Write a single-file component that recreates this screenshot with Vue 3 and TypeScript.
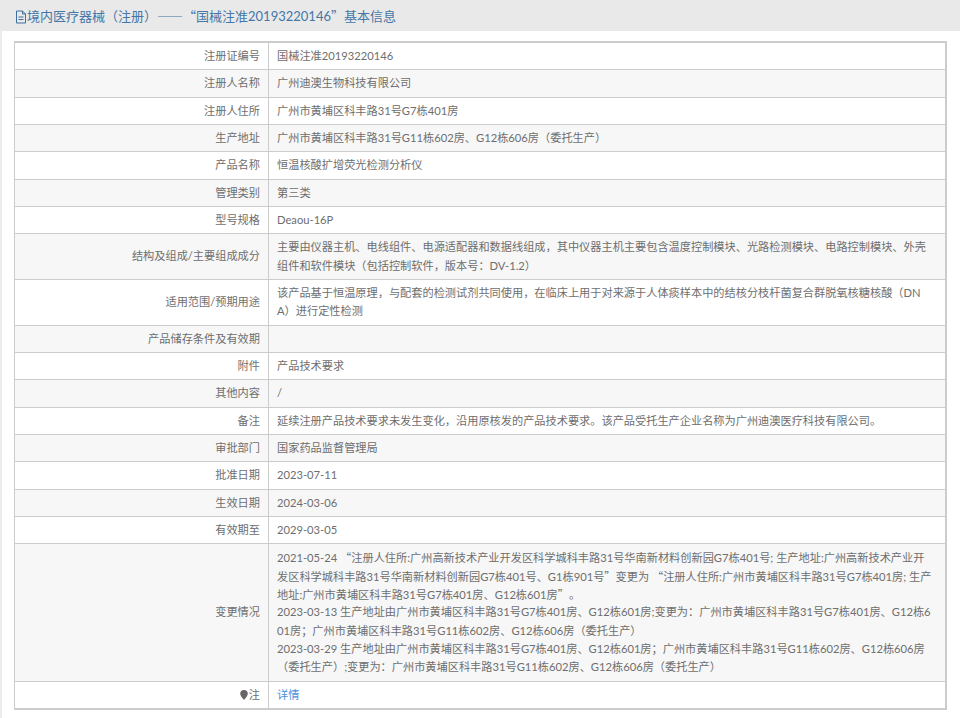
<script setup lang="ts">
interface Row { label: string; lines: string[]; link?: boolean; note?: boolean }
const rows: Row[] = [
  { label: '注册证编号', lines: ['国械注准20193220146'] },
  { label: '注册人名称', lines: ['广州迪澳生物科技有限公司'] },
  { label: '注册人住所', lines: ['广州市黄埔区科丰路31号G7栋401房'] },
  { label: '生产地址', lines: ['广州市黄埔区科丰路31号G11栋602房、G12栋606房（委托生产）'] },
  { label: '产品名称', lines: ['恒温核酸扩增荧光检测分析仪'] },
  { label: '管理类别', lines: ['第三类'] },
  { label: '型号规格', lines: ['Deaou-16P'] },
  { label: '结构及组成/主要组成成分', lines: ['主要由仪器主机、电线组件、电源适配器和数据线组成，其中仪器主机主要包含温度控制模块、光路检测模块、电路控制模块、外壳', '组件和软件模块（包括控制软件，版本号：DV-1.2）'] },
  { label: '适用范围/预期用途', lines: ['该产品基于恒温原理，与配套的检测试剂共同使用，在临床上用于对来源于人体痰样本中的结核分枝杆菌复合群脱氧核糖核酸（DN', 'A）进行定性检测'] },
  { label: '产品储存条件及有效期', lines: [''] },
  { label: '附件', lines: ['产品技术要求'] },
  { label: '其他内容', lines: ['/'] },
  { label: '备注', lines: ['延续注册产品技术要求未发生变化，沿用原核发的产品技术要求。该产品受托生产企业名称为广州迪澳医疗科技有限公司。'] },
  { label: '审批部门', lines: ['国家药品监督管理局'] },
  { label: '批准日期', lines: ['2023-07-11'] },
  { label: '生效日期', lines: ['2024-03-06'] },
  { label: '有效期至', lines: ['2029-03-05'] },
  { label: '变更情况', lines: [
    '2021-05-24 “注册人住所:广州高新技术产业开发区科学城科丰路31号华南新材料创新园G7栋401号; 生产地址:广州高新技术产业开',
    '发区科学城科丰路31号华南新材料创新园G7栋401号、G1栋901号”变更为 “注册人住所:广州市黄埔区科丰路31号G7栋401房; 生产',
    '地址:广州市黄埔区科丰路31号G7栋401房、G12栋601房”。',
    '2023-03-13 生产地址由广州市黄埔区科丰路31号G7栋401房、G12栋601房;变更为：广州市黄埔区科丰路31号G7栋401房、G12栋6',
    '01房；广州市黄埔区科丰路31号G11栋602房、G12栋606房（委托生产）',
    '2023-03-29 生产地址由广州市黄埔区科丰路31号G7栋401房、G12栋601房；广州市黄埔区科丰路31号G11栋602房、G12栋606房',
    '（委托生产）;变更为：广州市黄埔区科丰路31号G11栋602房、G12栋606房（委托生产）',
  ] },
  { label: '注', lines: ['详情'], link: true, note: true },
];
const parts = (s: string): string[] => s.split(/([“”])/).filter((p) => p !== '');
</script>

<template>
  <div class="page" lang="zh-CN">
    <h1 class="title">
      <svg class="doc" viewBox="0 0 12 14" width="12" height="14" aria-hidden="true">
        <path d="M1.5 1h6l3 3v9h-9z M7.5 1v3h3 M3.5 7h5 M3.5 9.5h5" fill="none" stroke="#3c6e9f" stroke-width="1" />
      </svg>境内医疗器械（注册）<span class="dash">——</span><span class="qo">“</span>国械注准20193220146<span class="qc">”</span>基本信息
    </h1>
    <div class="panel">
      <table class="info">
        <colgroup>
          <col class="c1" />
          <col />
        </colgroup>
        <tbody>
          <tr v-for="row in rows" :key="row.label">
            <th>
              <svg v-if="row.note" class="pin" viewBox="0 0 8 10" width="8" height="10" aria-hidden="true">
                <path d="M4 0a3.8 3.8 0 0 1 3.8 3.8C7.8 6 5.5 8 4 10 2.500 8 .2 6 .2 3.800A3.800 3.800 0 0 1 4 0z" fill="#666" />
              </svg>{{ row.label }}
            </th>
            <td>
              <a v-if="row.link" class="link">{{ row.lines[0] }}</a>
              <template v-else>
                <div v-for="(l, i) in row.lines" :key="i" class="ln"><template v-for="(p, j) in parts(l)" :key="j"><span v-if="p === '“'" class="qo">{{ p }}</span><span v-else-if="p === '”'" class="qc">{{ p }}</span><template v-else>{{ p }}</template></template></div>
              </template>
            </td>
          </tr>
        </tbody>
      </table>
    </div>
  </div>
</template>

<style>
html, body { margin: 0; background: #fff; }
</style>

<style scoped>
.page {
  width: 960px;
  height: 718px;
  overflow: hidden;
  box-sizing: border-box;
  font-family: Lato, "Noto Sans CJK SC", sans-serif;
  color: #6e6e6e;
}
.title {
  margin: 0;
  height: 31px;
  line-height: 31px;
  padding-left: 15px;
  background: #e9e9e9;
  color: #4477a8;
  font-size: 13px;
  font-weight: 400;
  white-space: nowrap;
}
.doc { vertical-align: -3px; margin-right: 0; }
.dash { font-family: "Noto Sans CJK SC", sans-serif; }
.qo, .qc { display: inline-block; width: 1em; font-family: "Noto Sans CJK SC", sans-serif; }
.qo { text-align: right; }
.qc { text-align: left; }
.panel {
  box-sizing: border-box;
  height: 687px;
  padding: 10px 12px 0 12px;
  border-left: 2px solid #ececec;
}
.info {
  width: 933px;
  border-collapse: collapse;
  table-layout: fixed;
  border-right: 2px solid #ccc;
  border-bottom: 2px solid #ccc;
}
.c1 { width: 254px; }
th, td {
  border: 1px solid #ccc;
  padding: 4px 8px;
  font-size: 11.2px;
  font-weight: 400;
  line-height: 18.33px;
  box-sizing: border-box;
}
th { text-align: right; }
tr:first-child th, tr:first-child td { border-top-width: 2px; }
tr:nth-child(even) th, tr:nth-child(even) td { background: #f7f7f7; }
.ln { white-space: nowrap; height: 18.33px; }
.pin { vertical-align: -1px; margin-right: 1px; }
.link { color: #4a90d9; }
</style>
